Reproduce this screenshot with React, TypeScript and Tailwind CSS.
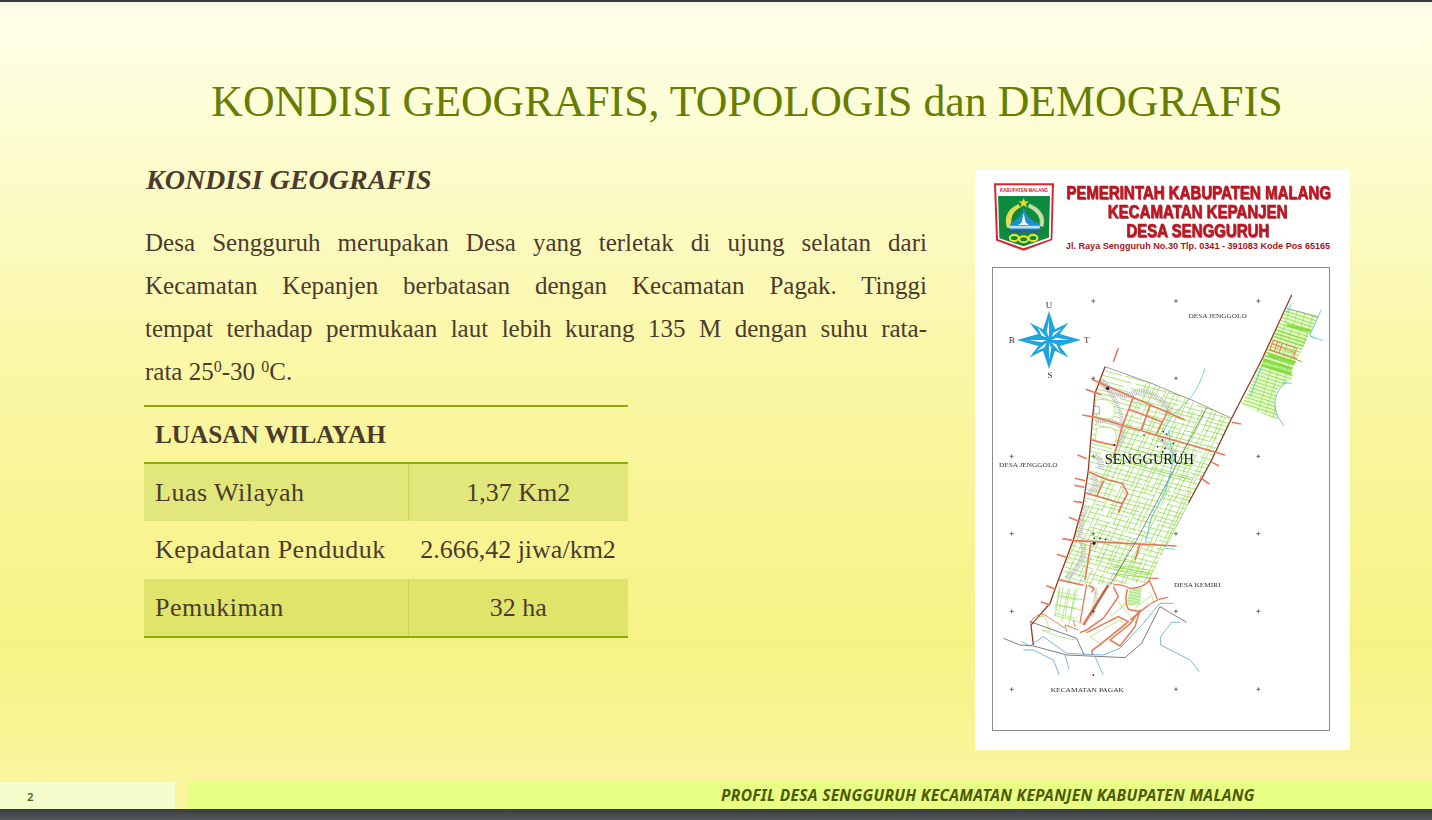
const serif = "font-['Liberation_Serif',serif]";

function Logo() {
  return (
    <svg viewBox="12 12 178 200" className="h-[68px] w-[60px] shrink-0">
      <path d="M12 12H190L185 180L100 212L18 182Z" fill="#d9262c" />
      <path d="M18 18H184L180 177L100 205L24 178Z" fill="#fff" />
      <path d="M24 50H178L175 173L100 199L28 175Z" fill="#0e8a3e" />
      <g transform="translate(101 38) scale(0.78 1)">
        <text x="0" y="0" textAnchor="middle" fontSize="17" fontWeight="700" fill="#c9252c" fontFamily="Liberation Sans">KABUPATEN MALANG</text>
      </g>
      <path d="M52 145C38 115 55 85 86 74L90 84C68 94 58 118 66 145Z" fill="#e2dc4e" />
      <path d="M116 72C146 82 170 108 158 142L146 140C154 115 136 94 112 84Z" fill="#c8e0a8" stroke="#2f9a4a" strokeWidth="3" strokeDasharray="5 3" />
      <path d="M100 82C96 105 82 122 60 132V150H146V132C120 122 104 105 100 82Z" fill="#1f8fd3" />
      <path d="M100 100L106 128L116 136H84L94 128Z" fill="#f2f8fb" />
      <path d="M58 138H148V146H58Z" fill="#bfe0ef" />
      <path d="M56 150H150V158H56Z" fill="#2a5f8f" />
      <path d="M100 55L104 66L116 66L106 73L110 84L100 77L90 84L94 73L84 66L96 66Z" fill="#f4e021" />
      <g fill="none" stroke="#e9e23a" strokeWidth="6">
        <ellipse cx="72" cy="174" rx="13" ry="9" />
        <ellipse cx="100" cy="178" rx="13" ry="9" />
        <ellipse cx="128" cy="174" rx="13" ry="9" />
      </g>
    </svg>
  );
}

const pr = (i: number, m: number) => ((i * 37 + 11) * (i + 5)) % m;
const parcelsA = Array.from({ length: 60 }, (_, i) => -60 + i * 14 + pr(i, 6));
const parcelsB = Array.from({ length: 40 }, (_, i) => 150 + i * 17 + pr(i, 8));
const stripA = Array.from({ length: 34 }, (_, i) => -180 + i * 11);
const stripB = Array.from({ length: 9 }, (_, i) => 830 + i * 25);
const hatch = Array.from({ length: 11 }, (_, i) => 690 + i * 4.5);
const dots = Array.from({ length: 80 }, (_, i) => [160 + pr(i, 560), 60 + ((i * 71) % 820)]);
const plus: [number, number][] = [
  [325, -177], [573, -177], [820, -177],
  [325, 55], [573, 55], [820, 55],
  [80, 289], [325, 289], [820, 289],
  [80, 521], [325, 521], [573, 521], [820, 521],
  [80, 754], [325, 754], [573, 754], [820, 754],
  [80, 988], [573, 988], [820, 988],
];

const mainOutline =
  "M360 20L330 100L322 180L310 330L295 430L265 540L220 660L195 730L138 795L145 855L300 885L420 893L470 850L525 735L490 655L545 555L610 430L680 300L740 175L620 120L570 100L500 70Z";
const upperOutline =
  "M360 20L330 100L322 180L310 330L295 430L265 540L225 665L300 675L490 668L545 555L610 430L680 300L740 175L620 120L570 100L500 70Z";
const stripOutline = "M905 -155L1000 -130L970 -70L920 30L925 50L875 90L870 130L880 180L770 135Z";

const roads = [
  "M320 58L600 180",
  "M302 88L350 105",
  "M292 165L330 172L720 285",
  "M445 112L410 205L385 295",
  "M495 135L470 210",
  "M432 148L530 185",
  "M550 150L515 222",
  "M320 240L392 257",
  "M310 335L370 360L412 370L428 400L412 430L400 458",
  "M300 398L415 432",
  "M355 362L335 410",
  "M278 285L305 296",
  "M270 355L300 362",
  "M268 376L298 382",
  "M266 424L295 428",
  "M252 472L285 485",
  "M232 536L268 542L575 558",
  "M465 553L450 600",
  "M318 548L300 660",
  "M215 583L245 592",
  "M222 660L295 676",
  "M184 677L212 688",
  "M167 725L195 735",
  "M678 305L702 318",
  "M645 352L673 372",
  "M740 187L768 192",
  "M400 -35L385 5",
];

function SouthDetail() {
  return (
    <g transform="translate(105 600)" fill="none">
      <g stroke="#9bdf5c" strokeWidth="1.9">
        <path d="M40 190Q50 165 75 170L90 215L65 210Q120 235 170 240M120 80L105 150M150 85L135 170M115 110L175 120M110 135L170 145" />
        <path d="M130 80L115 165M165 85L150 180M112 95L178 108M105 160L165 175" />
        <path d="M290 120L350 190M300 150L330 110M270 170L320 130M210 230L300 180L320 195L240 250ZM345 145L395 105M395 105L400 125" />
        <path d="M230 85L215 150M250 90L220 160" />
      </g>
      <g stroke="#e8775a">
        <path d="M265 75L190 195" strokeWidth="8" />
        <path d="M200 75L190 130L180 190M205 75L222 85L215 97" strokeWidth="4" />
        <path d="M280 75Q300 70 330 85Q370 85 390 60M388 55H415M388 60L412 118" strokeWidth="4" />
        <path d="M280 80L295 110L250 175L200 210L180 218" strokeWidth="4.5" />
        <path d="M322 88Q312 125 325 148L360 155" strokeWidth="4.5" />
        <path d="M200 218L295 170L325 185L245 250L215 272L218 285" strokeWidth="4.5" />
        <path d="M330 192L360 150L345 200L300 258L270 240Z" strokeWidth="4.5" />
        <path d="M380 140Q410 115 445 112M330 180Q360 155 380 140" strokeWidth="4" />
        <path d="M140 215L135 195L175 210M160 180L165 200M30 190Q50 155 75 165L135 205" strokeWidth="2.8" />
      </g>
      <g stroke="#333" strokeWidth="1.9">
        <path d="M30 185L170 235L192 285" />
        <path d="M-50 235L0 255L40 258L140 285L315 293L365 250L420 140L500 187" />
        <path d="M265 75L210 165" strokeWidth="1.6" />
      </g>
      <g stroke="#2d8fcb" strokeWidth="1.9">
        <path d="M5 245L30 258L70 230L140 280L250 285L300 265L370 190L420 130L460 130" />
        <path d="M10 270H40L100 300L118 345" />
        <path d="M135 285L147 328M225 290L250 345" />
        <path d="M480 187H455L422 230V255L510 300L538 335" />
      </g>
    </g>
  );
}

function MapDrawing() {
  return (
    <svg viewBox="0 0 336 462" className="h-full w-full blur-[0.5px]">
      <defs>
        <clipPath id="mainClip"><path d={mainOutline} /></clipPath>
        <clipPath id="upperClip"><path d={upperOutline} /></clipPath>
        <clipPath id="stripClip"><path d={stripOutline} /></clipPath>
      </defs>
      <g transform="translate(-8 92) scale(0.3333)">
        {plus.map(([x, y]) => (
          <path key={`${x}/${y}`} d={`M${x - 6} ${y}H${x + 6}M${x} ${y - 6}V${y + 6}`} stroke="#333" strokeWidth="2" />
        ))}

        <g clipPath="url(#upperClip)" stroke="#8fdc48" strokeWidth="2.2" fill="none">
          {parcelsA.map((y, i) => (
            <path key={y} d={`M150 ${y - 60}L800 ${y + 110}`} strokeDasharray={`${60 + pr(i, 120)} ${4 + pr(i, 22)}`} />
          ))}
          {parcelsB.map((x, i) => (
            <path key={x} d={`M${x + 380} -40L${x - 60} 900`} strokeDasharray={`${90 + pr(i, 150)} ${6 + pr(i, 30)}`} />
          ))}
          <path d="M420 260L620 320M400 300L620 360M380 620L500 640M380 640L500 655" strokeWidth="3" />
          <path d="M390 615L490 630M385 628L490 645M330 590L470 612" strokeWidth="2.4" />
        </g>
        <g clipPath="url(#mainClip)">
          <path d="M335 205Q395 190 395 230T330 245Z" fill="#fff" />
          <path d="M330 120Q385 110 390 150T335 170Z" fill="#fff" />
        </g>
        <g clipPath="url(#mainClip)" fill="none" stroke="#8fdc48" strokeWidth="1.9">
          <path d="M335 205Q395 190 395 230T330 245ZM330 120Q385 110 390 150T335 170Z" />
          <path d="M225 680L210 770M250 685L230 785M275 690L250 800M220 705L295 720M215 735L290 750M205 765L280 785" />
        </g>
        <g clipPath="url(#mainClip)" stroke="#bdbdbd" fill="none" strokeDasharray="3 3">
          <path d="M350 60Q400 125 445 100T555 150" strokeWidth="18" />
          <path d="M332 185Q380 172 405 200T392 262" strokeWidth="13" />
          <path d="M345 70Q380 100 395 130T410 190" strokeWidth="12" />
          <path d="M330 290Q355 300 345 325" strokeWidth="18" />
          <path d="M322 350Q345 370 312 400" strokeWidth="18" />
          <path d="M300 440Q290 480 285 530" strokeWidth="14" />
          <path d="M285 540Q320 590 245 655" strokeWidth="16" />
          <path d="M520 230L575 285" strokeWidth="14" />
          <path d="M315 680Q350 690 320 770" strokeWidth="10" />
        </g>
        <g clipPath="url(#mainClip)" fill="#6fd03a">
          {dots.map(([x, y], i) => <circle key={i} cx={x} cy={y} r="1.5" />)}
        </g>

        <g clipPath="url(#stripClip)" fill="none">
          <path d={stripOutline} fill="#e8fbd0" />
          {stripA.map((y, i) => (
            <path key={y} d={`M740 ${y - 30}L1020 ${y + 60}`} stroke="#8fe04a" strokeWidth={(i > 6 && i < 10) || (i > 12 && i < 17) ? 5 : 2.8} />
          ))}
          {stripB.map((x) => <path key={x} d={`M${x + 90} -170L${x - 20} 180`} stroke="#8fe04a" strokeWidth="2" />)}
          <path d="M905 -105L985 -85M850 -15L935 10M835 0L925 28M830 15L920 42" stroke="#86dd3e" strokeWidth="9" />
        </g>
        <path d="M905 -155L1000 -130" stroke="#666" strokeWidth="1.6" />
        <path d="M865 -60L935 -35L925 -5L855 -30ZM862 -48L930 -22M878 -55L868 -26M892 -50L882 -20M925 -5L950 5" fill="none" stroke="#e8775a" strokeWidth="3" />
        <path d="M920 -195L830 0L740 175L680 300L610 430" fill="none" stroke="#8a3a22" strokeWidth="3.8" />
        <path d="M610 430L545 555" fill="none" stroke="#8ed653" strokeWidth="2.4" />

        <path d="M360 20L500 70L570 100L620 120L740 175" fill="none" stroke="#555" strokeWidth="1.7" />
        <path d="M360 20L330 100L322 180L310 330L295 430L265 540L220 660L195 730L138 795L145 855" fill="none" stroke="#98341f" strokeWidth="3.8" />

        <g fill="none" stroke="#e8775a" strokeWidth="4.8">
          {roads.map((d) => <path key={d} d={d} />)}
        </g>
        <g stroke="#7fdc4a" strokeWidth="2.2">
          {hatch.map((y) => <path key={y} d={`M${432 + (y - 690) * -0.1} ${y}L${470 + (y - 690) * -0.1} ${y - 4}`} />)}
        </g>
        <SouthDetail />

        <path d="M665 143L455 540L375 675" fill="none" stroke="#444" strokeWidth="1.8" />

        <g fill="none" stroke="#2d8fcb" strokeWidth="1.8">
          <path d="M885 180Q868 155 870 125Q875 85 905 68M897 197L885 180" />
          <path d="M1000 -130L975 -75L990 -62" stroke="#2a9fd0" />
        </g>
        <g fill="none" stroke="#3bc0da" strokeWidth="2.2">
          <path d="M660 25Q640 90 610 120L560 170L535 215" />
          <path d="M550 210L565 300L540 400L500 470L480 550" />
          <path d="M540 565L570 568M830 20L795 110" />
          <path d="M920 -170L905 -140M1008 -150L1000 -130M975 -72L1015 -58M920 70L895 68" />
        </g>

        <g fill="#222">
          {[[368,85],[327,550],[535,215],[545,222],[532,240],[518,260],[540,265],[565,250],[533,275],[388,255],[477,225],[328,535],[345,535],[362,538],[325,945],[325,754]].map(([x, y]) => (
            <circle key={`${x}-${y}`} cx={x} cy={y} r={x === 368 || x === 327 ? 5 : 2.6} />
          ))}
        </g>
        <path d="M327 140H343V162H327Z" fill="#fff" stroke="#666" strokeWidth="1.5" />

        <g transform="translate(192 -60)">
          <path d="M0 -87L18 -32L58 -52L32 -18L96 0L32 18L58 52L18 32L0 87L-18 32L-58 52L-32 18L-96 0L-32 -18L-58 -52L-18 -32Z" fill="#1ea5df" />
          <path d="M0 -60L-7 -24L0 -8ZM60 0L22 -7L8 0ZM0 60L7 24L0 8ZM-60 0L-22 7L-8 0ZM38 -34L13 -22L8 -8ZM34 38L22 13L8 8ZM-38 34L-13 22L-8 8ZM-34 -38L-22 -13L-8 -8Z" fill="#fff" />
        </g>

        <g fontFamily="Liberation Serif" fill="#333" textAnchor="middle">
          <text x="192" y="-155" fontSize="27">U</text>
          <text x="80" y="-50" fontSize="27">B</text>
          <text x="305" y="-50" fontSize="27">T</text>
          <text x="195" y="55" fontSize="27">S</text>
          <text x="698" y="-125" fontSize="21" textLength="175" lengthAdjust="spacingAndGlyphs">DESA JENGGOLO</text>
          <text x="130" y="320" fontSize="21" textLength="176" lengthAdjust="spacingAndGlyphs">DESA JENGGOLO</text>
          <text x="493" y="312" fontSize="43" textLength="268" lengthAdjust="spacingAndGlyphs" fill="#111">SENGGURUH</text>
          <text x="637" y="682" fontSize="21" textLength="140" lengthAdjust="spacingAndGlyphs">DESA KEMIRI</text>
          <text x="307" y="995" fontSize="21" textLength="220" lengthAdjust="spacingAndGlyphs">KECAMATAN PAGAK</text>
        </g>
      </g>
    </svg>
  );
}

const headingLine =
  "h-[19px] origin-center scale-x-[0.835] whitespace-nowrap text-[18px] leading-[20px] [-webkit-text-stroke:0.5px_#c5121f] [text-shadow:1px_1px_1px_#777]";

function MapCard() {
  return (
    <div className="flex h-[580px] w-[375px] shrink-0 flex-col bg-white pl-[17px] pr-[20px] pt-[13px]">
      <div className="flex h-[84px] items-start">
        <div className="ml-[2px] shrink-0"><Logo /></div>
        <div className="ml-[11px] flex w-[266px] flex-col items-center font-['Liberation_Sans',sans-serif] font-bold text-[#c5121f]">
          <div className={headingLine}>PEMERINTAH KABUPATEN MALANG</div>
          <div className={headingLine}>KECAMATAN KEPANJEN</div>
          <div className={headingLine}>DESA SENGGURUH</div>
          <div className="mt-[1px] whitespace-nowrap text-[9.1px] leading-[10px] text-[#a8141c]">Jl. Raya Sengguruh No.30 Tlp. 0341 - 391083 Kode Pos 65165</div>
        </div>
      </div>
      <div className="h-[464px] w-[338px] border border-[#8b8b8b]">
        <MapDrawing />
      </div>
    </div>
  );
}

const tableRows = [
  { label: "Luas Wilayah", value: "1,37 Km2", bg: "bg-[#e1e77b]" },
  { label: "Kepadatan Penduduk", value: "2.666,42 jiwa/km2", bg: "" },
  { label: "Pemukiman", value: "32 ha", bg: "bg-[#dfe46b]" },
];

export default function App() {
  return (
    <div className="flex h-[820px] w-[1432px] flex-col overflow-hidden bg-[#54585b]">
      <div className="h-[2px] shrink-0 bg-[#3a3b3c]" />
      <div className={`flex h-[807px] shrink-0 flex-col bg-[linear-gradient(180deg,#f5f5e2_0px,#ffffea_8px,#fdfdd6_110px,#faf7a6_360px,#f7f285_640px,#f9f59c_780px)] ${serif}`}>
        <h1 className="h-[148px] shrink-0 pl-[62px] pt-[70px] text-center text-[43.85px] font-normal leading-[58px] text-[#677d00]">
          KONDISI GEOGRAFIS, TOPOLOGIS dan DEMOGRAFIS
        </h1>
        <div className="flex min-h-0 flex-1 items-start pl-[144px]">
          <div className="w-[783px] shrink-0 text-[#4b3b2d]">
            <h2 className="ml-[2px] h-[71px] pt-[12px] text-[28px] font-bold italic leading-[36px]">KONDISI GEOGRAFIS</h2>
            <div className="ml-[1px] w-[782px] text-[25px] leading-[43px]">
              <div className="[text-align-last:justify]">Desa Sengguruh merupakan Desa yang terletak di ujung selatan dari</div>
              <div className="[text-align-last:justify]">Kecamatan Kepanjen berbatasan dengan Kecamatan Pagak. Tinggi</div>
              <div className="[text-align-last:justify]">tempat terhadap permukaan laut lebih kurang 135 M dengan suhu rata-</div>
              <div>rata 25<sup className="text-[16px]">0</sup>-30 <sup className="text-[16px]">0</sup>C.</div>
            </div>
            <table className="mt-[12px] w-[484px] table-fixed border-collapse text-[26px] leading-[32px]">
              <colgroup>
                <col className="w-[264px]" />
                <col className="w-[220px]" />
              </colgroup>
              <thead>
                <tr className="h-[57px] border-y-2 border-[#8cae04]">
                  <th colSpan={2} className="pl-[11px] text-left text-[25.2px] font-bold">LUASAN WILAYAH</th>
                </tr>
              </thead>
              <tbody className="border-b-2 border-[#8cae04]">
                {tableRows.map((r) => (
                  <tr key={r.label} className={`h-[58px] ${r.bg}`}>
                    <td className="whitespace-nowrap pl-[11px] tracking-[0.5px]">{r.label}</td>
                    <td className={`whitespace-nowrap text-center ${r.bg ? "border-l border-[#ccd35a]" : ""}`}>{r.value}</td>
                  </tr>
                ))}
              </tbody>
            </table>
          </div>
          <div className="ml-[48px] mt-[20px]"><MapCard /></div>
        </div>
        <div className="flex h-[27px] shrink-0 font-['Noto_Sans',sans-serif]">
          <div className="flex w-[175px] items-center bg-[#f5fdcc] pl-[27px] pt-[3px] text-[11.5px] font-semibold text-[#4c6a10]">2</div>
          <div className="ml-[12px] flex flex-1 items-center bg-[#e8ff85] pl-[534px] pt-[1px] text-[15.5px] font-bold italic tracking-[0.3px] text-[#4d5a00]">
            <span className="whitespace-nowrap">PROFIL DESA SENGGURUH KECAMATAN KEPANJEN KABUPATEN MALANG</span>
          </div>
        </div>
      </div>
      <div className="flex-1 bg-[linear-gradient(180deg,#393c3f,#54585b)]" />
    </div>
  );
}
